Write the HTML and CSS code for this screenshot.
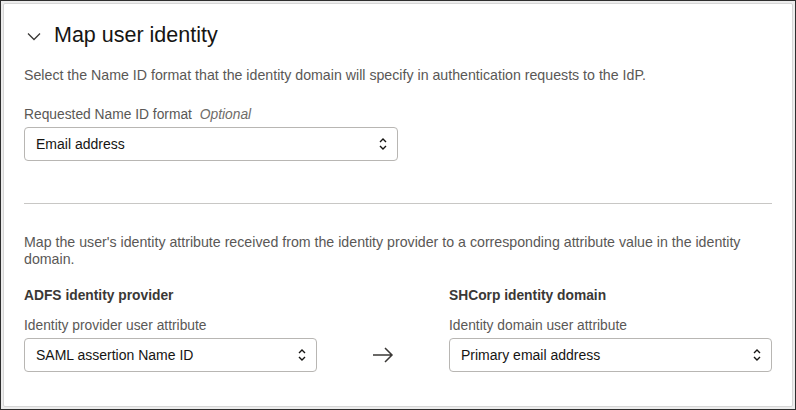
FILE: index.html
```html
<!DOCTYPE html>
<html>
<head>
<meta charset="utf-8">
<link rel="stylesheet" href="styles.css">
</head>
<body>
<div class="frame">
  <section class="panel">
    <header class="head">
      <svg class="chev" width="14" height="9" viewBox="0 0 14 9"><path d="M1 1.5 L7 7.5 L13 1.5" fill="none" stroke="#3a3836" stroke-width="1.3"/></svg>
      <h2 class="title">Map user identity</h2>
    </header>
    <p class="desc">Select the Name ID format that the identity domain will specify in authentication requests to the IdP.</p>
    <div class="field first">
      <div class="label">Requested Name ID format <span class="opt">Optional</span></div>
      <div class="select w373"><span>Email address</span><svg class="updown" width="10" height="14" viewBox="0 0 10 14"><path d="M2 5 L5 2 L8 5 M2 9 L5 12 L8 9" fill="none" stroke="#161513" stroke-width="1.4"/></svg></div>
    </div>
    <hr class="divider">
    <p class="desc two">Map the user's identity attribute received from the identity provider to a corresponding attribute value in the identity domain.</p>
    <div class="map">
      <div class="col">
        <div class="sub">ADFS identity provider</div>
        <div class="label">Identity provider user attribute</div>
        <div class="select"><span>SAML assertion Name ID</span><svg class="updown" width="10" height="14" viewBox="0 0 10 14"><path d="M2 5 L5 2 L8 5 M2 9 L5 12 L8 9" fill="none" stroke="#161513" stroke-width="1.4"/></svg></div>
      </div>
      <div class="arrowcol">
        <svg width="22" height="16" viewBox="0 0 22 16"><path d="M1 8 H20 M13 1 L20 8 L13 15" fill="none" stroke="#3a3836" stroke-width="1.5"/></svg>
      </div>
      <div class="col">
        <div class="sub">SHCorp identity domain</div>
        <div class="label">Identity domain user attribute</div>
        <div class="select"><span>Primary email address</span><svg class="updown" width="10" height="14" viewBox="0 0 10 14"><path d="M2 5 L5 2 L8 5 M2 9 L5 12 L8 9" fill="none" stroke="#161513" stroke-width="1.4"/></svg></div>
      </div>
    </div>
  </section>
</div>
</body>
</html>
```
FILE: styles.css
```css
html, body { margin: 0; padding: 0; }
body {
  width: 796px; height: 410px; overflow: hidden;
  font-family: "Liberation Sans", Arial, sans-serif;
  color: #161513;
}
.frame {
  box-sizing: border-box;
  width: 796px; height: 410px;
  border: 1px solid #2e2e2e;
  background: #ececec;
  padding: 2px;
}
.panel {
  box-sizing: border-box;
  height: 100%;
  background: #fff;
  border: 1px solid #d6d6d6;
  border-radius: 2px;
  padding: 0 20px 0 20px;
}
.head {
  display: flex; align-items: center;
  height: 62px;
}
.chev { margin-left: 3px; margin-right: 13px; margin-top: 2px; }
.title {
  margin: 0; font-weight: 400; font-size: 21.5px; color: #161513;
}
.desc {
  margin: 1px 0 0 0; font-size: 14.2px; line-height: 17px; color: #5a5856;
}
.field.first { margin-top: 22px; }
.label {
  font-size: 13.8px; line-height: 17px; color: #5a5856; margin-bottom: 4px;
}
.opt { font-style: italic; margin-left: 4px; color: #6f6c69; }
.select {
  box-sizing: border-box;
  height: 34px;
  border: 1px solid #b8b6b3;
  border-radius: 4px;
  display: flex; align-items: center; justify-content: space-between;
  padding: 0 9px 0 11px;
  font-size: 14px; color: #161513;
}
.w373 { width: 374px; }
.divider {
  border: 0; border-top: 1px solid #c8c7c5;
  margin: 42px 0 0 0;
}
.desc.two { margin-top: 30px; line-height: 16.5px; }
.map {
  display: grid;
  grid-template-columns: 293px 132px 1fr;
  margin-top: 20px;
}
.sub { font-size: 13.8px; font-weight: 700; color: #3a3836; line-height: 17px; margin-bottom: 13px; }
.arrowcol { display: flex; align-items: flex-end; justify-content: center; padding-bottom: 9px; }
```
